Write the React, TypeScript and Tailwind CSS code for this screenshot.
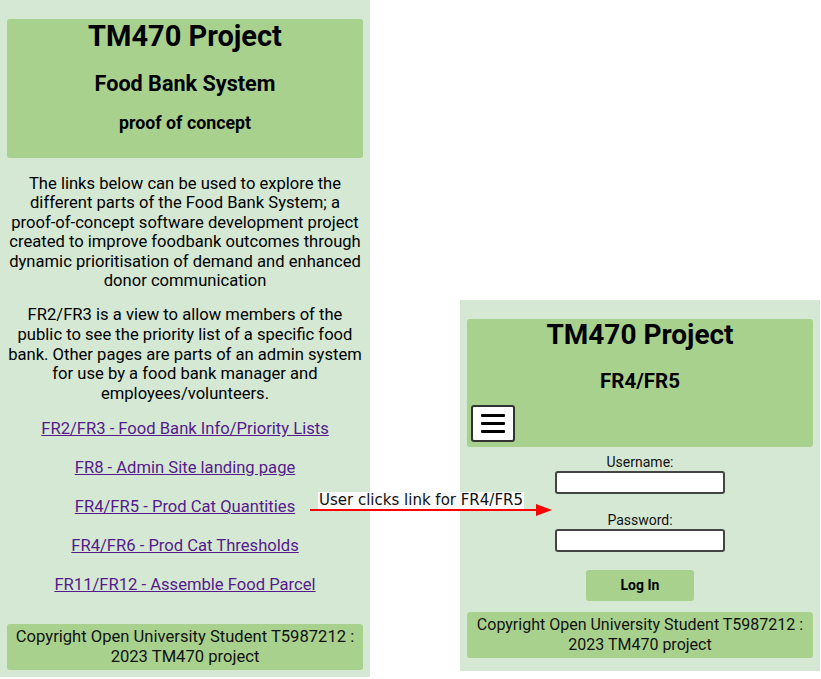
import React from 'react';

const links = [
  'FR2/FR3 - Food Bank Info/Priority Lists',
  'FR8 - Admin Site landing page',
  'FR4/FR5 - Prod Cat Quantities',
  'FR4/FR6 - Prod Cat Thresholds',
  'FR11/FR12 - Assemble Food Parcel',
];

const Footer: React.FC<{ size: string }> = ({ size }) => (
  <div
    className={`mx-[7px] rounded-[3px] bg-[#a9d18e] h-[46px] pt-[3px] text-center leading-[19.5px] text-[#111] ${size}`}
  >
    Copyright Open University Student T5987212 :
    <br />
    2023 TM470 project
  </div>
);

const App: React.FC = () => {
  return (
    <div
      className="relative w-[821px] h-[679px] bg-white overflow-hidden text-black"
      style={{ fontFamily: 'Roboto, "Liberation Sans", sans-serif' }}
    >
      <div className="flex items-start">
        {/* Landing page */}
        <div className="w-[370px] h-[677px] bg-[#d5e8d4] pt-[19px] pb-[7px] flex flex-col">
          <div className="mx-[7px] rounded-[3px] bg-[#a9d18e] h-[139px] text-center">
            <h1 className="text-[29px] leading-[34px] font-bold">TM470 Project</h1>
            <h2 className="mt-[18px] text-[21.6px] leading-[26px] font-bold">Food Bank System</h2>
            <h3 className="mt-[15px] text-[17.8px] leading-[22px] font-bold">proof of concept</h3>
          </div>

          <p className="mt-[16px] px-[4px] text-center text-[16.6px] leading-[19.4px]">
            The links below can be used to explore the different parts of the Food Bank System; a{' '}
            <span className="whitespace-nowrap">proof-of-concept</span> software development project
            created to improve foodbank outcomes through dynamic prioritisation of demand and
            enhanced donor communication
          </p>
          <p className="mt-[15px] px-[4px] text-center text-[16.6px] leading-[19.6px]">
            FR2/FR3 is a view to allow members of the public to see the priority list of a specific
            food bank. Other pages are parts of an admin system for use by a food bank manager and
            employees/volunteers.
          </p>

          <div className="mt-[16px] flex flex-col items-center gap-[20px]">
            {links.map((l) => (
              <a
                key={l}
                href="#"
                className="text-[16.6px] leading-[19px] text-[#551a8b] underline"
              >
                {l}
              </a>
            ))}
          </div>

          <div className="mt-auto">
            <Footer size="text-[16.6px]" />
          </div>
        </div>

        {/* Login page */}
        <div className="ml-[90px] mt-[300px] w-[360px] h-[371px] bg-[#d5e8d4] pt-[19px] flex flex-col">
          <div className="mx-[7px] rounded-[3px] bg-[#a9d18e] h-[128px] text-center flex flex-col">
            <h1 className="text-[28px] leading-[32px] font-bold">TM470 Project</h1>
            <h2 className="mt-[18px] text-[20.5px] leading-[24px] font-bold">FR4/FR5</h2>
            <button className="mt-auto mb-[5px] ml-[4px] w-[44px] h-[37px] bg-white border-2 border-[#333] rounded-[3px] flex flex-col items-center justify-center gap-[5px]">
              <span className="block w-[24px] h-[3px] bg-black rounded-[1px]" />
              <span className="block w-[24px] h-[3px] bg-black rounded-[1px]" />
              <span className="block w-[24px] h-[3px] bg-black rounded-[1px]" />
            </button>
          </div>

          <form className="flex flex-col items-center text-[14px] text-[#111]">
            <label className="mt-[7px] leading-[16px]">Username:</label>
            <input className="mt-[1px] w-[170px] h-[23px] bg-white border-2 border-[#444] rounded-[3px]" />
            <label className="mt-[18px] leading-[16px]">Password:</label>
            <input
              type="password"
              className="mt-[1px] w-[170px] h-[23px] bg-white border-2 border-[#444] rounded-[3px]"
            />
            <button
              type="button"
              className="mt-[18px] w-[108px] h-[31px] rounded-[3px] bg-[#a9d18e] font-bold text-[14px] text-black"
            >
              Log In
            </button>
          </form>

          <div className="mt-[11px]">
            <Footer size="text-[16px]" />
          </div>
        </div>
      </div>

      {/* Annotation arrow */}
      <div className="absolute left-[310px] top-[504px] w-[242px] h-[12px]">
        <svg width="242" height="12" viewBox="0 0 242 12">
          <line x1="0" y1="6" x2="228" y2="6" stroke="#ff0000" strokeWidth="2" />
          <polygon points="226,0 242,6 226,12" fill="#ff0000" />
        </svg>
      </div>
      <div
        className="absolute left-[318px] top-[492px] h-[17px] px-[1px] bg-[#fafafa] text-[15px] leading-[17px] text-[#111]"
        style={{ fontFamily: '"DejaVu Sans", sans-serif' }}
      >
        User clicks link for FR4/FR5
      </div>
    </div>
  );
};

export default App;
